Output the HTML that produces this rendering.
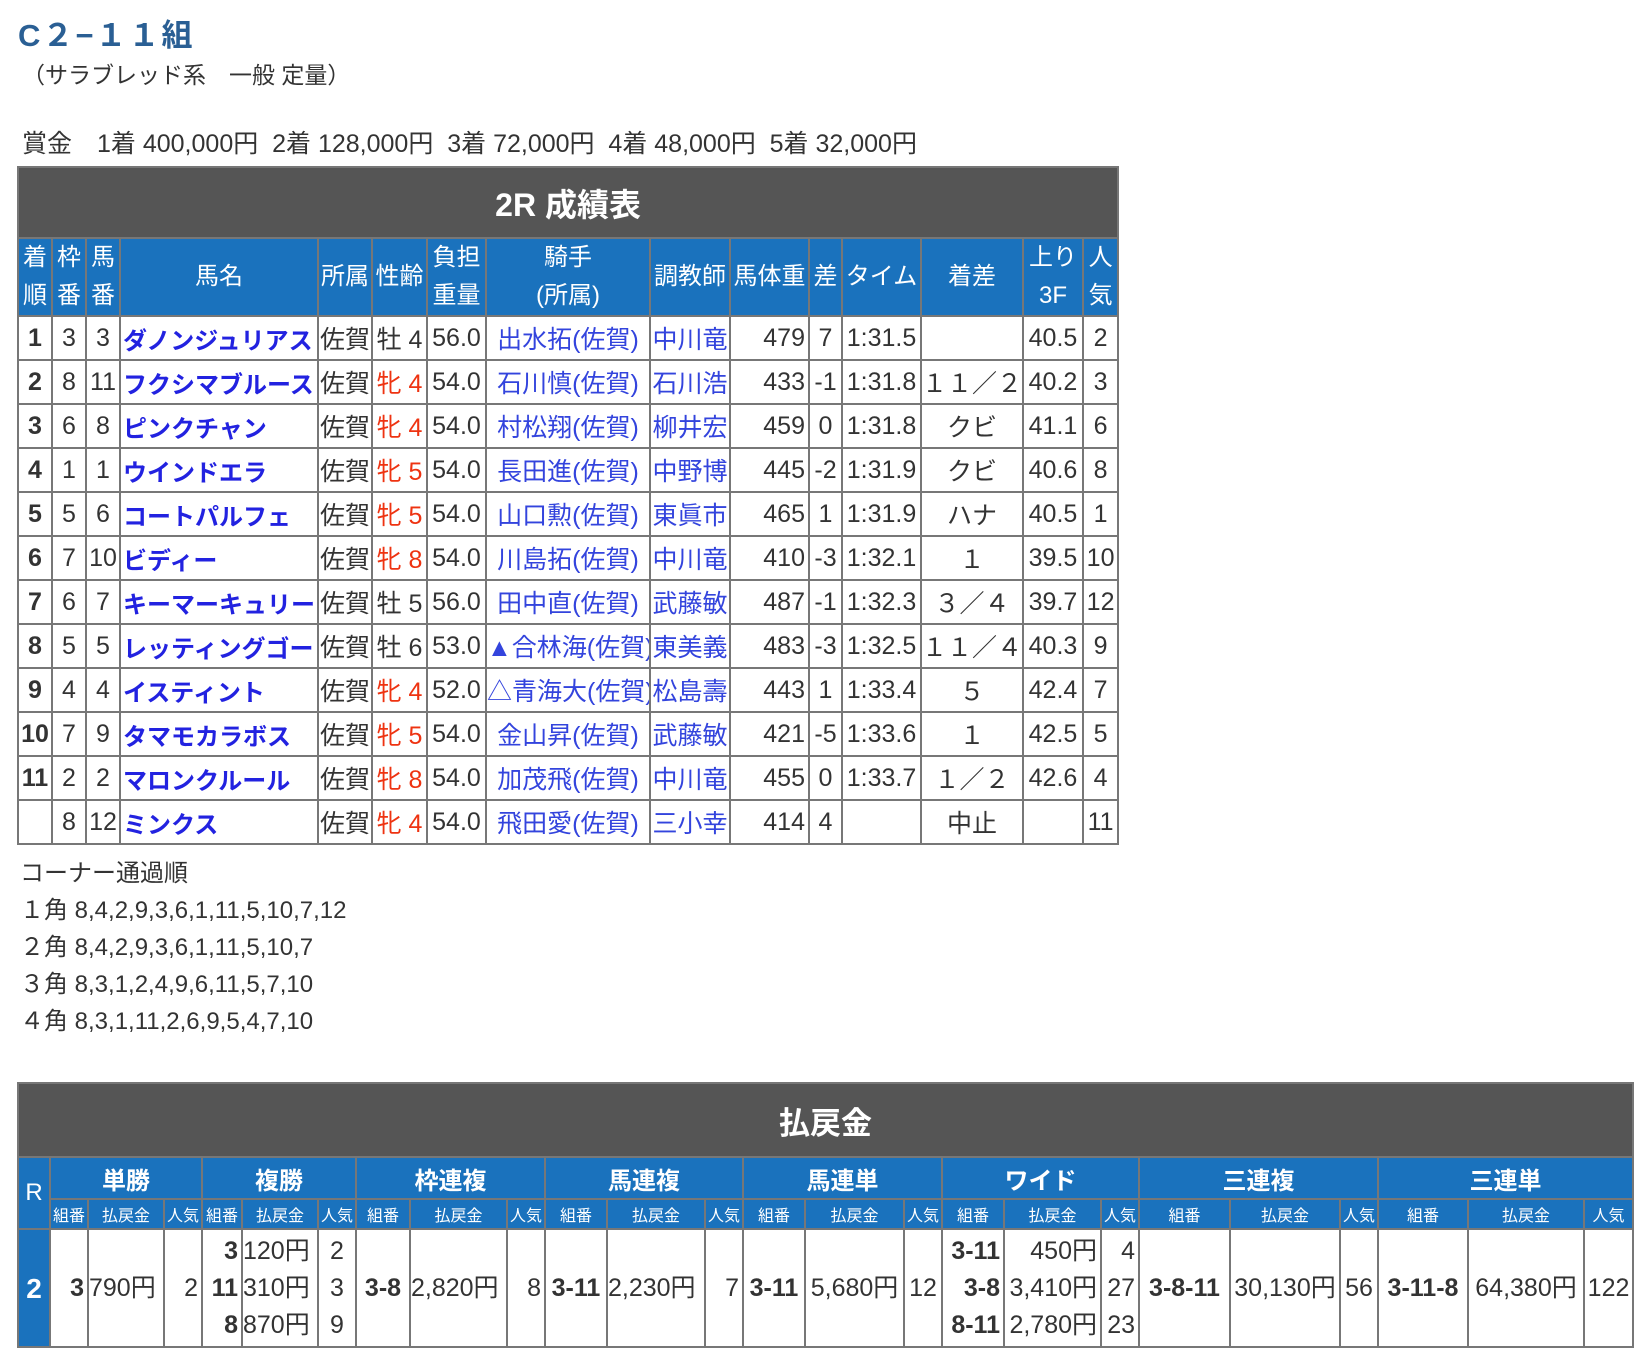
<!DOCTYPE html>
<html><head><meta charset="utf-8"><style>
body{margin:0;width:1652px;height:1370px;background:#fff;font-family:"Liberation Sans","Noto Sans CJK JP",sans-serif;color:#333;position:relative;overflow:hidden}
.abs{position:absolute;white-space:nowrap}
table{border-collapse:collapse;table-layout:fixed;position:absolute}
td,th{border:2px solid #777;padding:0;text-align:center;white-space:nowrap;overflow:hidden}
.tt{background:#555;color:#fff;font-weight:bold}
.hd th{background:#1a72bd;color:#fff;font-weight:normal}
#r td{font-size:25px;height:42px}
#r .hd th{font-size:24px;line-height:38px}
#r td.n{font-size:24px}
.n{color:#2222e0;font-weight:bold;text-align:left;padding-left:2px}
.j{color:#3344dd}
.red{color:#ee3311}
.b{font-weight:bold}
.rt{text-align:right;padding-right:3px}
#p td{font-size:25px}
#p .h1 th{font-size:24px;font-weight:bold}
#p .h2 th{font-size:16px}
</style></head><body>
<div class="abs" style="left:18px;top:10px;font-size:31px;font-weight:bold;color:#2a5f94;letter-spacing:2px">C２−１１組</div>
<div class="abs" style="left:22px;top:56px;font-size:23px">（サラブレッド系　一般 定量）</div>
<div class="abs" style="left:22px;top:124px;font-size:25px">賞金　1着 400,000円&nbsp; 2着 128,000円&nbsp; 3着 72,000円&nbsp; 4着 48,000円&nbsp; 5着 32,000円</div>

<table id="r" style="left:17px;top:166px;width:1100px">
<colgroup><col style="width:34px"><col style="width:34px"><col style="width:34px"><col style="width:198px"><col style="width:54px"><col style="width:55px"><col style="width:59px"><col style="width:164px"><col style="width:80px"><col style="width:79px"><col style="width:33px"><col style="width:79px"><col style="width:102px"><col style="width:60px"><col style="width:35px"></colgroup>
<tr><td colspan="15" class="tt" style="height:69px;font-size:32px">2R 成績表</td></tr>
<tr class="hd" style="height:78px"><th>着<br>順</th><th>枠<br>番</th><th>馬<br>番</th><th>馬名</th><th>所属</th><th>性齢</th><th>負担<br>重量</th><th>騎手<br>(所属)</th><th>調教師</th><th>馬体重</th><th>差</th><th>タイム</th><th>着差</th><th>上り<br>3F</th><th>人<br>気</th></tr>
<tr><td class="b">1</td><td>3</td><td>3</td><td class="n">ダノンジュリアス</td><td>佐賀</td><td>牡 4</td><td>56.0</td><td class="j">出水拓(佐賀)</td><td class="j">中川竜</td><td class="rt">479</td><td>7</td><td>1:31.5</td><td></td><td>40.5</td><td>2</td></tr>
<tr><td class="b">2</td><td>8</td><td>11</td><td class="n">フクシマブルース</td><td>佐賀</td><td class="red">牝 4</td><td>54.0</td><td class="j">石川慎(佐賀)</td><td class="j">石川浩</td><td class="rt">433</td><td>-1</td><td>1:31.8</td><td>１１／２</td><td>40.2</td><td>3</td></tr>
<tr><td class="b">3</td><td>6</td><td>8</td><td class="n">ピンクチャン</td><td>佐賀</td><td class="red">牝 4</td><td>54.0</td><td class="j">村松翔(佐賀)</td><td class="j">柳井宏</td><td class="rt">459</td><td>0</td><td>1:31.8</td><td>クビ</td><td>41.1</td><td>6</td></tr>
<tr><td class="b">4</td><td>1</td><td>1</td><td class="n">ウインドエラ</td><td>佐賀</td><td class="red">牝 5</td><td>54.0</td><td class="j">長田進(佐賀)</td><td class="j">中野博</td><td class="rt">445</td><td>-2</td><td>1:31.9</td><td>クビ</td><td>40.6</td><td>8</td></tr>
<tr><td class="b">5</td><td>5</td><td>6</td><td class="n">コートパルフェ</td><td>佐賀</td><td class="red">牝 5</td><td>54.0</td><td class="j">山口勲(佐賀)</td><td class="j">東眞市</td><td class="rt">465</td><td>1</td><td>1:31.9</td><td>ハナ</td><td>40.5</td><td>1</td></tr>
<tr><td class="b">6</td><td>7</td><td>10</td><td class="n">ビディー</td><td>佐賀</td><td class="red">牝 8</td><td>54.0</td><td class="j">川島拓(佐賀)</td><td class="j">中川竜</td><td class="rt">410</td><td>-3</td><td>1:32.1</td><td>１</td><td>39.5</td><td>10</td></tr>
<tr><td class="b">7</td><td>6</td><td>7</td><td class="n">キーマーキュリー</td><td>佐賀</td><td>牡 5</td><td>56.0</td><td class="j">田中直(佐賀)</td><td class="j">武藤敏</td><td class="rt">487</td><td>-1</td><td>1:32.3</td><td>３／４</td><td>39.7</td><td>12</td></tr>
<tr><td class="b">8</td><td>5</td><td>5</td><td class="n">レッティングゴー</td><td>佐賀</td><td>牡 6</td><td>53.0</td><td class="j">▲合林海(佐賀)</td><td class="j">東美義</td><td class="rt">483</td><td>-3</td><td>1:32.5</td><td>１１／４</td><td>40.3</td><td>9</td></tr>
<tr><td class="b">9</td><td>4</td><td>4</td><td class="n">イスティント</td><td>佐賀</td><td class="red">牝 4</td><td>52.0</td><td class="j">△青海大(佐賀)</td><td class="j">松島壽</td><td class="rt">443</td><td>1</td><td>1:33.4</td><td>５</td><td>42.4</td><td>7</td></tr>
<tr><td class="b">10</td><td>7</td><td>9</td><td class="n">タマモカラボス</td><td>佐賀</td><td class="red">牝 5</td><td>54.0</td><td class="j">金山昇(佐賀)</td><td class="j">武藤敏</td><td class="rt">421</td><td>-5</td><td>1:33.6</td><td>１</td><td>42.5</td><td>5</td></tr>
<tr><td class="b">11</td><td>2</td><td>2</td><td class="n">マロンクルール</td><td>佐賀</td><td class="red">牝 8</td><td>54.0</td><td class="j">加茂飛(佐賀)</td><td class="j">中川竜</td><td class="rt">455</td><td>0</td><td>1:33.7</td><td>１／２</td><td>42.6</td><td>4</td></tr>
<tr><td></td><td>8</td><td>12</td><td class="n">ミンクス</td><td>佐賀</td><td class="red">牝 4</td><td>54.0</td><td class="j">飛田愛(佐賀)</td><td class="j">三小幸</td><td class="rt">414</td><td>4</td><td></td><td>中止</td><td></td><td>11</td></tr>
</table>

<div class="abs" style="left:20px;top:855px;font-size:24px;line-height:37px">コーナー通過順<br>１角 8,4,2,9,3,6,1,11,5,10,7,12<br>２角 8,4,2,9,3,6,1,11,5,10,7<br>３角 8,3,1,2,4,9,6,11,5,7,10<br>４角 8,3,1,11,2,6,9,5,4,7,10</div>

<table id="p" style="left:17px;top:1082px;width:1616px">
<colgroup><col style="width:32px"><col style="width:38px"><col style="width:76px"><col style="width:38px"><col style="width:40px"><col style="width:76px"><col style="width:38px"><col style="width:54px"><col style="width:97px"><col style="width:38px"><col style="width:62px"><col style="width:98px"><col style="width:38px"><col style="width:62px"><col style="width:99px"><col style="width:38px"><col style="width:62px"><col style="width:97px"><col style="width:38px"><col style="width:91px"><col style="width:110px"><col style="width:38px"><col style="width:90px"><col style="width:116px"><col style="width:49px"></colgroup>
<tr><td colspan="25" class="tt" style="height:72px;font-size:31px">払戻金</td></tr>
<tr class="hd h1" style="height:42px"><th rowspan="2" style="font-weight:normal">R</th><th colspan="3">単勝</th><th colspan="3">複勝</th><th colspan="3">枠連複</th><th colspan="3">馬連複</th><th colspan="3">馬連単</th><th colspan="3">ワイド</th><th colspan="3">三連複</th><th colspan="3">三連単</th></tr>
<tr class="hd h2" style="height:30px"><th>組番</th><th>払戻金</th><th>人気</th><th>組番</th><th>払戻金</th><th>人気</th><th>組番</th><th>払戻金</th><th>人気</th><th>組番</th><th>払戻金</th><th>人気</th><th>組番</th><th>払戻金</th><th>人気</th><th>組番</th><th>払戻金</th><th>人気</th><th>組番</th><th>払戻金</th><th>人気</th><th>組番</th><th>払戻金</th><th>人気</th></tr>
<tr style="height:118px;line-height:37px"><td style="background:#1a72bd;color:#fff;font-weight:bold;font-size:28px">2</td><td class="b rt">3</td><td style="text-align:left">790円</td><td class="rt">2</td><td class="b rt">3<br>11<br>8</td><td style="text-align:left">120円<br>310円<br>870円</td><td>2<br>3<br>9</td><td class="b">3-8</td><td style="text-align:left">2,820円</td><td class="rt">8</td><td class="b">3-11</td><td style="text-align:left">2,230円</td><td class="rt">7</td><td class="b">3-11</td><td>5,680円</td><td>12</td><td class="b rt">3-11<br>3-8<br>8-11</td><td class="rt">450円<br>3,410円<br>2,780円</td><td class="rt">4<br>27<br>23</td><td class="b">3-8-11</td><td>30,130円</td><td>56</td><td class="b">3-11-8</td><td>64,380円</td><td>122</td></tr>
</table>
</body></html>
